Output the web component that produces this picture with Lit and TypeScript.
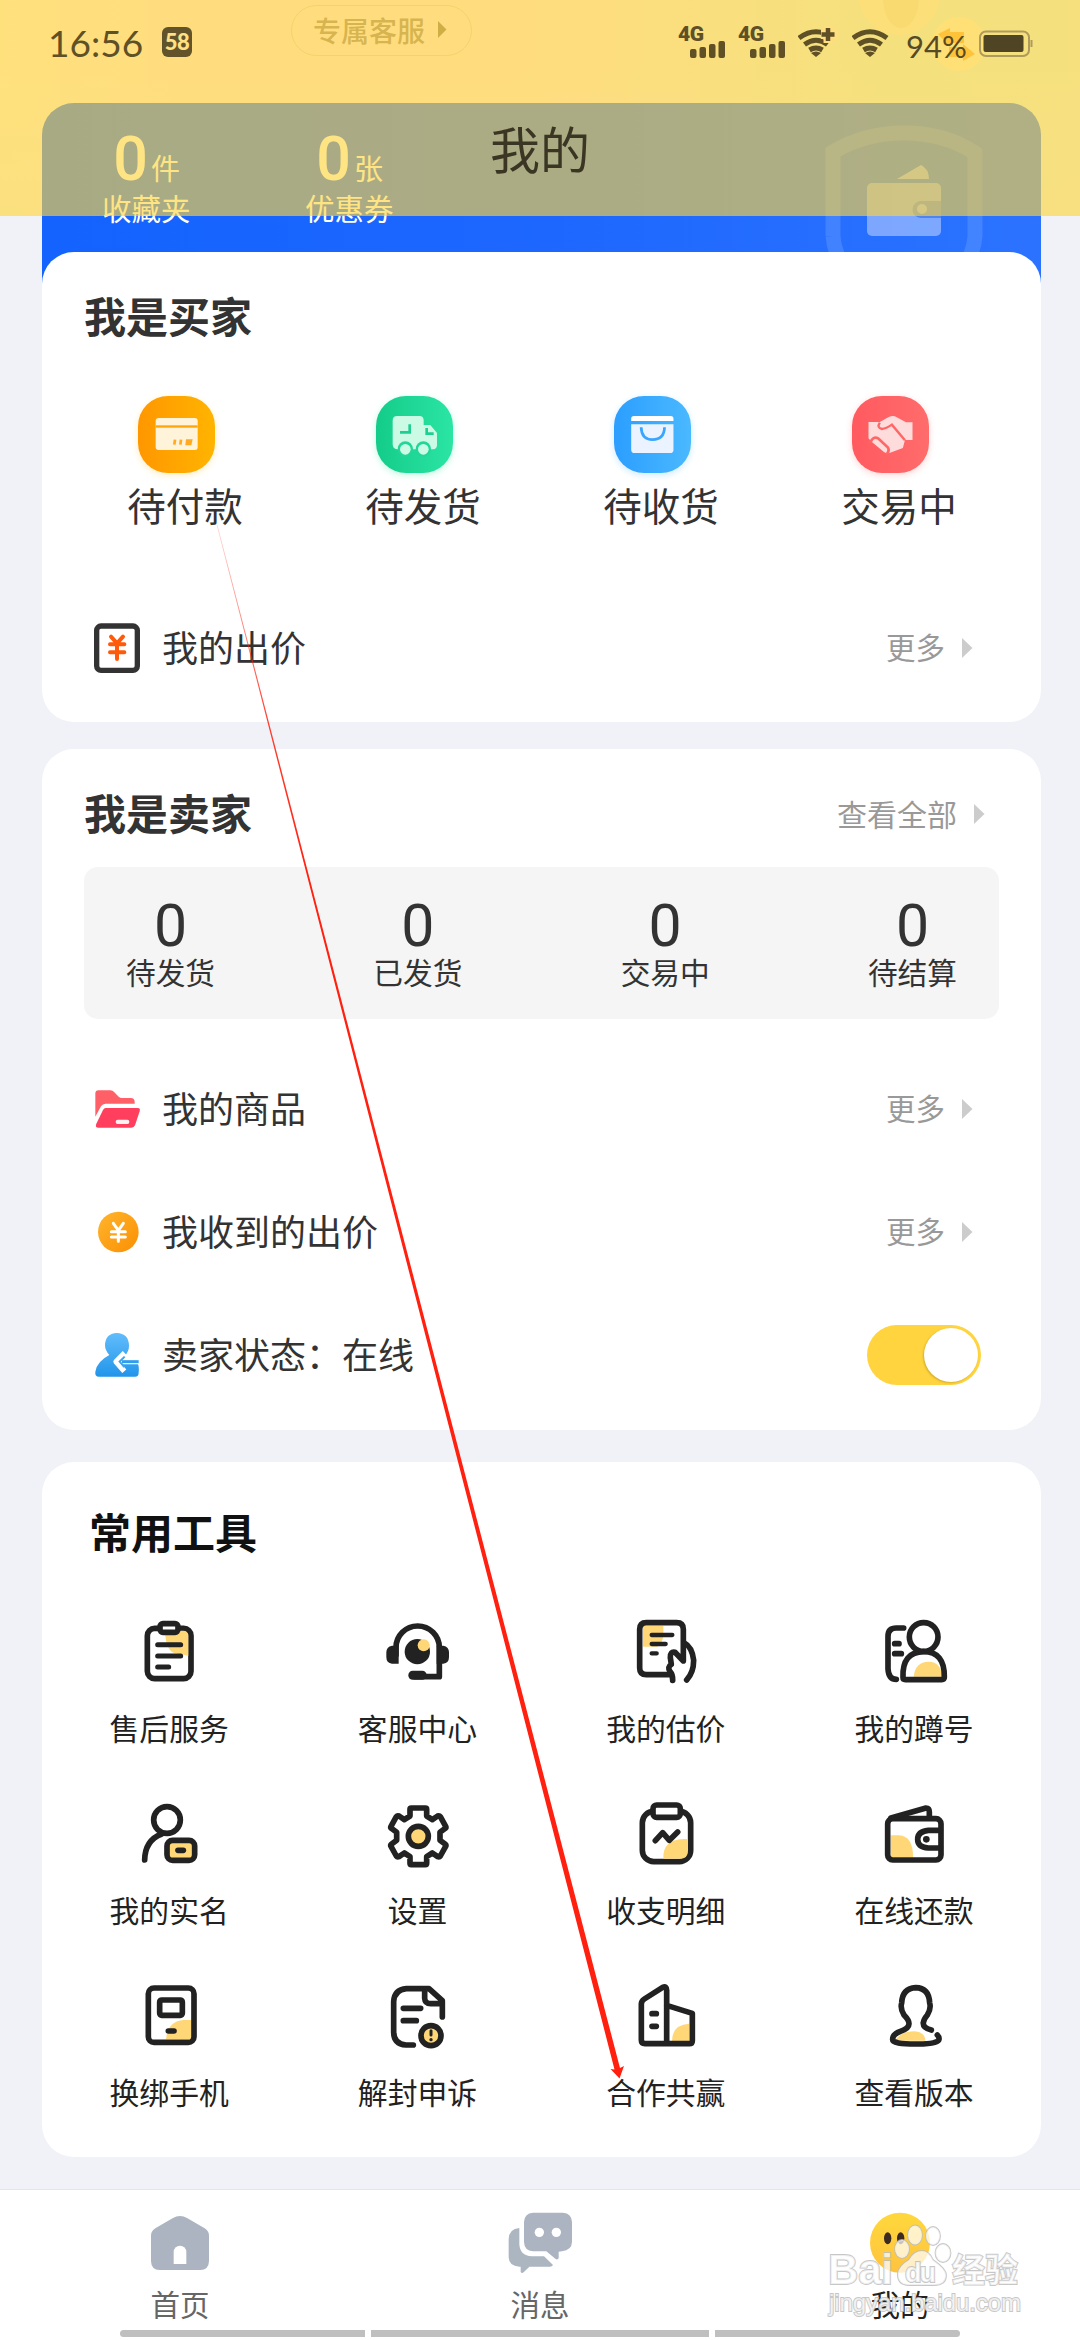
import { LitElement, html, css, svg } from "lit";
import { customElement, property } from "lit/decorators.js";

const SUN = "#ffd777";

const tileIcons = {
  card: svg`<rect x="343" y="144" width="126" height="96" rx="9" fill="#fff3d9"/>
    <rect x="343" y="166" width="126" height="7" fill="#ffa50a"/>
    <path d="M401 209l-2 15M419 209l-2 15" stroke="#ffaa20" stroke-width="8"/>
    <path d="M434 208h20l-4 18h-18z" fill="#ffaa20"/>`,
  truck: svg`<path d="M1069 138h66q13 0 13 13v14h20l20 24v36q0 12-12 13h-108q-13-2-13-16v-71q0-13 14-13z" fill="#ccfbe5"/>
    <path d="M1106 163v24h-29M1157 174v17h21" fill="none" stroke="#1fcf92" stroke-width="8"/>
    <circle cx="1093" cy="237" r="23" fill="#22d699"/><circle cx="1147" cy="237" r="23" fill="#22d699"/>
    <circle cx="1093" cy="238" r="16" fill="#ccfbe5"/><circle cx="1147" cy="238" r="16" fill="#ccfbe5"/>`,
  bag: svg`<path d="M262 153v-7q0-8 8-8h107q8 0 8 8v7z" fill="#fff"/>
    <path d="M262 163h123v76q0 10-10 10h-103q-10 0-10-10z" fill="#eaf3ff"/>
    <path d="M291 172Q292 209 324 209Q358 209 359 172" fill="none" stroke="#39a5ff" stroke-width="8"/>`,
  shake: svg`<path d="M951 156h33l26-15q12-6 22 0l28 16h19v53h-22l-6 24-39 15q-8 3-16-3l-36-31-9-10z" fill="#ffdcdc"/>
    <path d="M984 158q-10 15 6 19 12-1 29-13l38 47" fill="none" stroke="#ff6767" stroke-width="7"/>
    <path d="M956 218q8-21 23-13l28 27q6 9-2 19" fill="none" stroke="#ff6767" stroke-width="8"/>`,
};

const rowIcons = {
  bid: svg`<rect x="170" y="765" width="122" height="133" rx="13" fill="#fff" stroke="#333" stroke-width="16"/>
    <path d="M213 797l18 20 18-20M231 817v47M210 820h43M210 844h43" fill="none" stroke="#ff5a0a" stroke-width="12" stroke-linecap="round"/>`,
  folder: svg`<path d="M176 121h35q7 0 12 6l13 13q4 4 10 4h26q12 0 12 12v5h-88q-8 0-13 8l-17 31v-69q0-10 10-10z" fill="#ff5f66"/>
    <path d="M197 174h96q9 0 6 10l-14 42q-3 7-11 7h-98q-12 0-7-12l20-41q3-6 8-6z" fill="#ff3f5d"/>
    <rect x="227" y="209" width="41" height="13" rx="6" fill="#fff0f2"/>`,
  coin: svg`<defs><linearGradient id="coin" x1="0" y1="0" x2="1" y2="1"><stop offset="0" stop-color="#ffb52e"/><stop offset="1" stop-color="#fb8f02"/></linearGradient></defs>
    <circle cx="235" cy="546" r="61" fill="url(#coin)"/>
    <path d="M220 520l15 21 15-21M235 541v33M214 545h42M214 561h42" fill="none" stroke="#fff" stroke-width="9" stroke-linecap="round"/>`,
  seller: svg`<defs><linearGradient id="seller" x1="0" y1="0" x2="0" y2="1"><stop offset="0" stop-color="#62bdfb"/><stop offset="1" stop-color="#2195ea"/></linearGradient></defs>
    <path d="M230 849q36 1 37 38 0 18-13 30l-3 9 42 14q5 10 3 28 0 12-11 12H177q-13 0-11-15 5-31 42-50-13-14-13-29 1-36 35-37z" fill="url(#seller)"/>
    <path d="M299 935h-56M254 909l-26 26 25 29" fill="none" stroke="#fff" stroke-width="16" stroke-linejoin="round"/>
    <path d="M296 935h-50" fill="none" stroke="#2f9eee" stroke-width="9"/>
    <path d="M254 920l-15 15 14 16" fill="none" stroke="#3ba6f2" stroke-width="6"/>`,
};

const tools = [
  ["售后服务", "207 66", svg`<rect x="262" y="115" width="131" height="151" rx="22"/>
    <path class="sun" d="M315 122q2 54 25 66l45 9v-63q-3-12-15-12z"/>
    <rect x="300" y="101" width="54" height="26" rx="9" fill="#fff"/>
    <path class="mid" d="M293 164h69M293 198h69M293 231h33"/>`],
  ["客服中心", "951 66", svg`<path d="M1008 195v-22a65 65 0 0 1 130 0v87h-72"/>
    <path class="ink" d="M1016 167v54h-20q-17-2-17-20v-14q0-17 17-20zM1130 167v54h20q17-2 17-20v-14q0-17-17-20z"/>
    <rect class="ink" x="1045" y="242" width="55" height="27" rx="13"/>
    <circle class="ink" cx="1072" cy="185" r="38"/><circle class="sun" cx="1091" cy="166" r="18"/>`],
  ["我的估价", "195 66", svg`<path class="sun" d="M246 108h61v30q-3 22-18 32h-43z"/>
    <path d="M326 254h-70q-20 0-20-20v-116q0-20 20-20h91q20 0 20 20v95l-25-26q-15-3-14 16l3 20q-13 8-4 21 9 10 8 27"/>
    <path d="M369 158q25 13 29 53 0 37-21 59"/>
    <path class="thin" d="M272 135h62M272 162h42M272 190h15"/>`],
  ["我的蹲号", "939 66", svg`<path class="sun" d="M1058 260q4-44 45-45 38 1 40 45z"/>
    <path d="M1028 114h-22q-25 0-25 25v98q2 31 25 31"/>
    <path d="M1001 161h13M1001 191h20"/>
    <circle cx="1088" cy="141" r="43"/>
    <path d="M1033 269q-7 0-7-7-3-76 62-77 63 0 62 76 0 8-8 8z"/>`],
  ["我的实名", "207 612", svg`<circle cx="321" cy="690" r="40"/><path d="M305 732q-50 19-51 78"/>
    <rect x="321" y="751" width="83" height="60" rx="17" fill="${SUN}"/><path d="M354 781h16"/>`],
  ["设置", "951 612", svg`<path d="M1054 654h42q4 0 4 4v20l17 11 16-11q5-2 8 2l16 29q2 4-1 6l-16 12v24l16 12q3 3 1 6l-16 29q-3 4-8 2l-16-11-17 11v20q0 4-4 4h-42q-4 0-4-4v-20l-17-11-16 11q-5 2-8-2l-16-29q-2-3 1-6l16-12v-24l-16-12q-3-2-1-6l16-29q3-4 8-2l16 11 17-11v-20q0-4 4-4z"/>
    <circle cx="1075" cy="739" r="30" fill="${SUN}"/>`],
  ["收支明细", "195 612", svg`<rect x="244" y="664" width="145" height="151" rx="34"/>
    <path class="sun" d="M307 806q-3-57 61-59h12v42q-2 15-18 17z"/>
    <rect x="276" y="645" width="82" height="37" rx="11" fill="#fff"/>
    <path d="M283 752l22-24 20 23 25-25"/>`],
  ["在线还款", "939 612", svg`<path class="sun" d="M989 736h25q43 3 42 66h-67z"/>
    <rect x="980" y="686" width="160" height="124" rx="15"/>
    <path d="M990 684l105-30q10 0 10 12v18"/><path d="M1138 721h-36q-32 3-32 27t32 26h36"/>
    <circle class="ink" cx="1096" cy="748" r="10"/>`],
  ["换绑手机", "207 78", svg`<path class="sun" d="M394 210h-24q-47 4-52 58h76z"/>
    <rect x="265" y="114" width="137" height="163" rx="17"/><rect x="299" y="150" width="68" height="46" rx="6"/>
    <path d="M325 243h17"/>`],
  ["解封申诉", "951 78", svg`<path d="M1060 285h-22q-37-2-37-40v-90q2-36 38-39h68l40 36v49M1094 118v27q1 16 18 16h32"/>
    <path d="M1030 175h52M1030 212h39"/><circle cx="1113" cy="257" r="30" fill="${SUN}"/>
    <path class="fine" d="M1113 242v13"/><circle class="ink" cx="1113" cy="269" r="5"/>`],
  ["合作共赢", "195 78", svg`<path class="sun" d="M333 274q0-50 51-53v53z"/>
    <path d="M241 162q0-9 9-15l55-35q12-5 12 9v160h-65q-11 0-11-11zM317 166l77 24v82q0 9-9 9h-68"/>
    <path d="M273 191h13M273 229h13"/>`],
  ["查看版本", "939 78", svg`<path class="sun" d="M1003 272q15-28 57-28 32 2 33 28z"/>
    <path d="M1111 240q-26-6-24-22 1-10 12-23 12-20 7-36-2-45-42-46-40 2-42 46-5 16 7 36 15 15 15 26 0 14-26 23-24 9-23 25 0 13 69 13 69 1 70-14 1-7-5-13"/>`],
] as const;

const navIcons = {
  home: svg`<path d="M360 798q11 0 21 6l53 31q13 8 13 22v77q-1 26-26 26H299q-25 0-26-26v-77q0-14 13-22l53-31q10-6 21-6z" fill="#abb4c0"/>
    <path d="M341 942v-36a19 19 0 0 1 38 0v36z" fill="#fff"/>`,
  chat: svg`<path d="M178 114q-31 2-32 34v54q1 27 32 28h4v15q2 7 9 2l17-17h62q6 0 9-5l-27-26h-37q-35-2-37-36z" fill="#abb6c1"/>
    <path d="M219 68h90q26 2 27 28v60q-1 25-30 28l-10 1v20q-4 6-10 1l-27-22h-40q-26-2-27-28V96q1-26 27-28z" fill="#abb4c0"/>
    <circle cx="238" cy="127" r="14" fill="#fff"/><circle cx="289" cy="127" r="14" fill="#fff"/>`,
  face: svg`<defs><linearGradient id="face" x1="0" y1="0" x2="0" y2="1"><stop offset="0" stop-color="#ffd83c"/><stop offset="1" stop-color="#ffc33e"/></linearGradient></defs>
    <circle cx="1020" cy="878" r="90" fill="url(#face)"/>
    <ellipse cx="983" cy="865" rx="11" ry="18" fill="#3d2b22"/><ellipse cx="1022" cy="865" rx="11" ry="18" fill="#3d2b22"/>`,
};

const base = css`
  * { box-sizing: border-box; }
  svg { display: block; flex: none; }
`;

@customElement("list-row")
class ListRow extends LitElement {
  @property() icon: keyof typeof rowIcons = "bid";
  @property() box = "";
  @property() label = "";
  @property({ type: Boolean }) toggle = false;
  static styles = [base, css`
    :host { display: flex; align-items: center; height: 123px; padding: 0 68px 0 50px; }
    :host([toggle]) { padding-right: 60px; }
    .label { margin-left: 18px; flex: 1; font-size: 36px; line-height: 50px; color: #333; padding-bottom: 4px; }
    .more { font-size: 29.5px; line-height: 40px; color: #999; margin-right: 16px; padding-bottom: 4px; }
    .switch { width: 114px; height: 60px; border-radius: 30px; background: #ffd43e; display: flex; justify-content: flex-end; padding: 3px; }
    .knob { width: 54px; height: 54px; border-radius: 50%; background: #fff; box-shadow: -1px 1px 2px rgba(120, 90, 0, 0.3); }
  `];
  render() {
    return html`<svg width="52" height="52" viewBox="${this.box} 156 156">${rowIcons[this.icon]}</svg>
      <span class="label">${this.label}</span>
      ${this.toggle
        ? html`<div class="switch"><div class="knob"></div></div>`
        : html`<span class="more">更多</span>
          <svg width="12" height="22" viewBox="0 0 12 22"><path d="M1 1l10.500 10L1 21z" fill="#ccc" /></svg>`}`;
  }
}

@customElement("status-bar")
class StatusBar extends LitElement {
  static styles = [base, css`
    :host { display: flex; height: 86px; padding: 0 46px 0 48px; color: #5f5025; font-family: Lato, sans-serif; }
    .time { font-size: 37px; line-height: 40px; margin-top: 23px; width: 114px; }
    .badge { width: 30px; height: 30px; margin-top: 27px; border-radius: 6px; background: #63532b; color: #ffe083; font: 900 22px/30px Lato, sans-serif; text-align: center; letter-spacing: -0.5px; }
    .icons { margin-left: auto; display: flex; }
    .signal { width: 60px; padding-top: 26px; }
    .net { display: block; font: 900 21px/17px "Roboto", sans-serif; height: 17px; letter-spacing: -0.5px; }
    .bars { margin: -2px 0 0 12px; }
    .pct { font-size: 31px; line-height: 36px; margin-top: 28px; width: 73px; color: #574a24; }
  `];
  wifi(plus: boolean) {
    return html`<svg width="54" height="60" viewBox="0 0 54 60">
      <g fill="none" stroke="#5f5025" stroke-width="5">
        <path d="M1 38Q18 25.500 35 38" /><path d="M6.500 44.500Q18 36 29.500 44.500" /><path d="M11.500 50Q18 46 24.500 50" />
      </g><path d="M13 53q5-3 10 0l-5 4z" fill="#5f5025" />
      ${plus ? svg`<path d="M30 26v17M23 34.500h17" stroke="#ffde80" stroke-width="9"/><path d="M30 28v13M23.500 34.500h13" stroke="#5f5025" stroke-width="4.500"/>` : ""}
    </svg>`;
  }
  render() {
    const signal = html`<div class="signal"><span class="net">4G</span>
      <svg class="bars" width="36" height="17" viewBox="0 0 36 17" fill="#5f5025">
        <rect y="8" width="6.500" height="9" rx="2" /><rect x="9.500" y="6" width="6.500" height="11" rx="2" />
        <rect x="19" y="3" width="6.500" height="14" rx="2" /><rect x="28.500" y="0" width="6.500" height="17" rx="2" />
      </svg></div>`;
    return html`<span class="time">16:56</span><span class="badge">58</span>
      <div class="icons">${signal}${signal}${this.wifi(true)}${this.wifi(false)}
        <span class="pct">94%</span>
        <svg width="55" height="60" viewBox="0 0 55 60">
          <rect x="1" y="31.500" width="49" height="24.500" rx="6" fill="none" stroke="#ad9a5c" stroke-width="2" />
          <rect x="4.500" y="35" width="40" height="17" rx="2" fill="#4f4524" /><rect x="51.500" y="40" width="2" height="7" fill="#ad9a5c" />
        </svg>
      </div>`;
  }
}

@customElement("app-root")
class AppRoot extends LitElement {
  static styles = [base, css`
    :host { display: block; position: relative; width: 1080px; height: 2340px; overflow: hidden; background: #f0f2f7;
      font-family: "Noto Sans CJK SC", sans-serif; color: #333; }
    .page { display: flex; flex-direction: column; height: 100%; }
    .top { height: 103px; padding: 5px 0 0 291px; }
    .backdrop { position: absolute; left: 0; top: 0; width: 1080px; height: 216px;
      background: linear-gradient(180deg, transparent 30%, rgba(240, 242, 247, .65) 100%), linear-gradient(90deg, #fff6ea 0, #ffebf0 18%, #ffebf0 48%, #e4f5ee 82%, #e6f4ef 100%); }
    .decor { position: absolute; left: 840px; top: 0; }
    .pill { position: relative; width: 181px; height: 51px; border: 1.5px solid #e6cdb8; border-radius: 26px; display: flex; align-items: center; padding: 0 0 2px 21px;
      font-size: 28px; line-height: 40px; font-weight: 500; color: #917e70; gap: 13px; }
    .vip { position: relative; margin: 0 39px 0 42px; height: 187px; border-radius: 32px 32px 0 0; display: flex; padding: 28px 0 0 60px;
      background: linear-gradient(90deg, #1463fe, #1d67fe 50%, #2b73ff); color: #fff; }
    .count { width: 203px; }
    .figure { display: flex; align-items: baseline; height: 56px; line-height: 56px; padding-left: 9px; }
    .figure b { font: 500 61px/56px Roboto, sans-serif; width: 39px; text-align: center; }
    .figure span { font-size: 29px; margin-left: 1px; }
    .caption { display: block; font-size: 29.5px; line-height: 36px; margin-top: 2px; }
    .shield { position: absolute; left: 778px; top: 17px; }
    .veil { position: absolute; left: 0; top: 0; width: 1080px; height: 216px; background: rgba(255, 212, 60, 0.63); }
    .title { display: block; text-align: center; font-size: 50px; line-height: 60px; color: #3a3623; margin-top: 31px; }
    .card { position: relative; margin: 0 39px 0 42px; background: #fff; border-radius: 32px; flex: none; }
    .buyer { height: 470px; margin-top: -38px; padding-top: 33px; }
    .seller { height: 681px; margin-top: 27px; padding-top: 33px; }
    .tools { height: 695px; margin-top: 32px; padding-top: 39px; }
    .heading { display: flex; align-items: center; height: 60px; padding: 0 56px 0 42px; }
    .heading svg { margin-top: 4px; }
    h2 { margin: 0; flex: 1; font-size: 42px; line-height: 60px; font-weight: 700; }
    .all { font-size: 30px; line-height: 40px; color: #999; margin: 1px 16px 0 0; }
    .tools h2 { color: #111; padding-left: 5px; }
    .orders { display: grid; grid-template-columns: repeat(4, 238px); margin: 51px 0 57px 24px; }
    .order { display: flex; flex-direction: column; align-items: center; font-size: 38.5px; line-height: 50px; gap: 6px; }
    .tile { width: 77px; height: 77px; border-radius: 30px; margin-right: 17px; }
    .t-card { background: linear-gradient(90deg, #ff9700, #ffb400); box-shadow: 0 2px 7px #ffedc0; }
    .t-truck { background: linear-gradient(90deg, #14cc8a, #2be5a4); box-shadow: 0 2px 7px #bff7e2; }
    .t-bag { background: linear-gradient(90deg, #2b9eff, #4bb9ff); box-shadow: 0 2px 7px #cdeaff; }
    .t-shake { background: linear-gradient(90deg, #ff5a60, #ff6c6b); box-shadow: 0 2px 7px #ffd5d5; }
    .stats { display: flex; justify-content: space-between; margin: 25px 42px 28px; height: 152px; border-radius: 14px; background: #f5f5f5; padding: 31px 42px 0; }
    .stat { display: flex; flex-direction: column; align-items: center; font-size: 29.7px; line-height: 36px; }
    .stat b { font: 400 59px/56px Roboto, sans-serif; }
    .grid { display: grid; grid-template-columns: repeat(4, 248.3px); grid-auto-rows: 182px; margin: 51px 0 0 3px; }
    .tool { display: flex; flex-direction: column; align-items: center; gap: 15px; font-size: 29.8px; line-height: 40px; color: #222; }
    .tool svg { fill: none; stroke: #222; stroke-width: 17; stroke-linecap: round; stroke-linejoin: round; }
    .tool .sun { fill: #ffd777; stroke: none; }
    .tool .ink { fill: #222; stroke: none; }
    .mid { stroke-width: 15; }
    .thin { stroke-width: 13; }
    .fine { stroke-width: 9; }
    nav { height: 151px; margin-top: 32px; background: #fff; border-top: 1px solid #e3e5ea; display: grid; grid-template-columns: repeat(3, 1fr); padding-top: 13px; }
    .tab { display: flex; flex-direction: column; align-items: center; gap: 2px; font-size: 29.5px; line-height: 36px; color: #666; }
    .tab.on { color: #222; }
    .strips { position: absolute; left: 120px; top: 2330px; width: 840px; height: 7px; display: grid; grid-template-columns: 245px 338px 245px; gap: 6px; border-radius: 4px; overflow: hidden; }
    .strips i { background: #bfbfbf; }
    .over { position: absolute; left: 0; top: 0; pointer-events: none; }
    .wm { font-family: "Liberation Sans", "Noto Sans CJK SC", sans-serif; fill: #fff; fill-opacity: 0.72; stroke: #bdbdbd; stroke-width: 1.8px; stroke-opacity: .85; paint-order: stroke; }
  `];
  render() {
    const counts = [["0", "件", "收藏夹"], ["0", "张", "优惠券"]];
    const orders = [
      ["card", "待付款", "290 78 231 231"], ["truck", "待发货", "1005 78 231 231"],
      ["bag", "待收货", "212 78 224 231"], ["shake", "交易中", "903 78 224 231"],
    ] as const;
    const tabs = [["home", "首页", "240 759"], ["chat", "消息", "120 39"], ["face", "我的", "900 759"]] as const;
    return html`
      <div class="backdrop"></div>
      <svg class="decor" width="150" height="100" viewBox="0 0 150 100">
        <circle cx="59" cy="-6" r="41" fill="#f6f2e0" /><ellipse cx="61" cy="-2" rx="18" ry="30" fill="#ece4cc" />
        <circle cx="119" cy="44" r="27" fill="#fdf3dc" />
        <path d="M98 34l12-6v4h14v11h-14v4zM135 54l-12 7v-4h-14v-10h14v-3z" fill="#ffa636" />
      </svg>
      <div class="page">
        <div class="top"><div class="pill">专属客服
          <svg width="9" height="17" viewBox="0 0 9 17"><path d="M0 0l8.500 8.500L0 17z" fill="#806c58" /></svg></div></div>
        <div class="vip">
          ${counts.map(([n, unit, name]) => html`<div class="count">
            <div class="figure"><b>${n}</b><span>${unit}</span></div><span class="caption">${name}</span></div>`)}
          <svg class="shield" width="170" height="140" viewBox="820 120 170 140">
            <path d="M833 236V152Q865 133 904 133Q945 133 975 153V236q-1 14-8 26M833 236q1 14 8 26" fill="none" stroke="#5c95ff" stroke-opacity=".5" stroke-width="15" />
            <path d="M897 179l24-14q8 4 8 14z" fill="#a5c5ff" opacity=".8" />
            <rect x="867" y="183" width="74" height="53" rx="5" fill="#8db2ff" opacity=".85" />
            <path d="M941 201h-20a8.500 8.500 0 0 0 0 17h20z" fill="#4d84f0" /><circle cx="922" cy="209" r="5" fill="#8db2ff" />
          </svg>
        </div>
        <section class="card buyer">
          <div class="heading"><h2>我是买家</h2></div>
          <div class="orders">${orders.map(([k, name, box]) => html`<div class="order">
            <div class="tile t-${k}"><svg width="77" height="77" viewBox=${box} preserveAspectRatio="none">${tileIcons[k]}</svg></div>
            <span>${name}</span></div>`)}</div>
          <list-row icon="bid" box="156 753" label="我的出价"></list-row>
        </section>
        <section class="card seller">
          <div class="heading"><h2>我是卖家</h2><span class="all">查看全部</span>
            <svg width="12" height="22" viewBox="0 0 12 22"><path d="M1 1l10.500 10L1 21z" fill="#ccc" /></svg></div>
          <div class="stats">${["待发货", "已发货", "交易中", "待结算"].map((s) => html`<div class="stat"><b>0</b><span>${s}</span></div>`)}</div>
          <list-row icon="folder" box="156 99" label="我的商品"></list-row>
          <list-row icon="coin" box="156 468" label="我收到的出价"></list-row>
          <list-row icon="seller" box="156 837" label="卖家状态：在线" toggle></list-row>
        </section>
        <section class="card tools">
          <div class="heading"><h2>常用工具</h2></div>
          <div class="grid">${tools.map(([name, at, art]) => html`<div class="tool">
            <svg width="80" height="80" viewBox="${at} 240 240">${art}</svg><span>${name}</span></div>`)}</div>
        </section>
        <nav>${tabs.map(([k, name, at]) => html`<div class="tab ${k === "face" ? "on" : ""}">
          <svg width="80" height="80" viewBox="${at} 240 240">${navIcons[k]}</svg><span>${name}</span></div>`)}</nav>
      </div>
      <div class="strips"><i></i><i></i><i></i></div>
      <div class="veil"><status-bar></status-bar><span class="title">我的</span></div>
      <svg class="over" width="1080" height="2340" viewBox="0 0 1080 2340">
        <defs><linearGradient id="trail" gradientUnits="userSpaceOnUse" x1="217" y1="525" x2="310" y2="880">
          <stop offset="0" stop-color="#ff2010" stop-opacity=".2" /><stop offset=".55" stop-color="#ff2010" stop-opacity=".85" /><stop offset="1" stop-color="#ff2010" /></linearGradient></defs>
        <path d="M216.700 525h.7L620 2068l4-2-4.500 12.500-9-9.500 4 .5z" fill="url(#trail)" />
        <g class="wm">
          <text x="828" y="2284" font-size="42" font-weight="700" textLength="65">Bai</text>
          <ellipse cx="902" cy="2249" rx="7" ry="9" /><ellipse cx="915" cy="2235" rx="7" ry="9.500" />
          <ellipse cx="933" cy="2236" rx="7" ry="9" /><ellipse cx="943" cy="2253" rx="7.500" ry="9" />
          <path d="M922 2251q7 0 11 9 13 9 13 15 0 10-12 10h-26q-11-1-10-12 1-7 11-13 5-9 13-9z" />
          <text x="905" y="2282" font-size="27" font-weight="700" textLength="31">du</text>
          <text x="952" y="2282" font-size="33" font-weight="700">经验</text>
          <text x="829" y="2311" font-size="24" textLength="192">jingyan.baidu.com</text>
        </g>
      </svg>`;
  }
}
